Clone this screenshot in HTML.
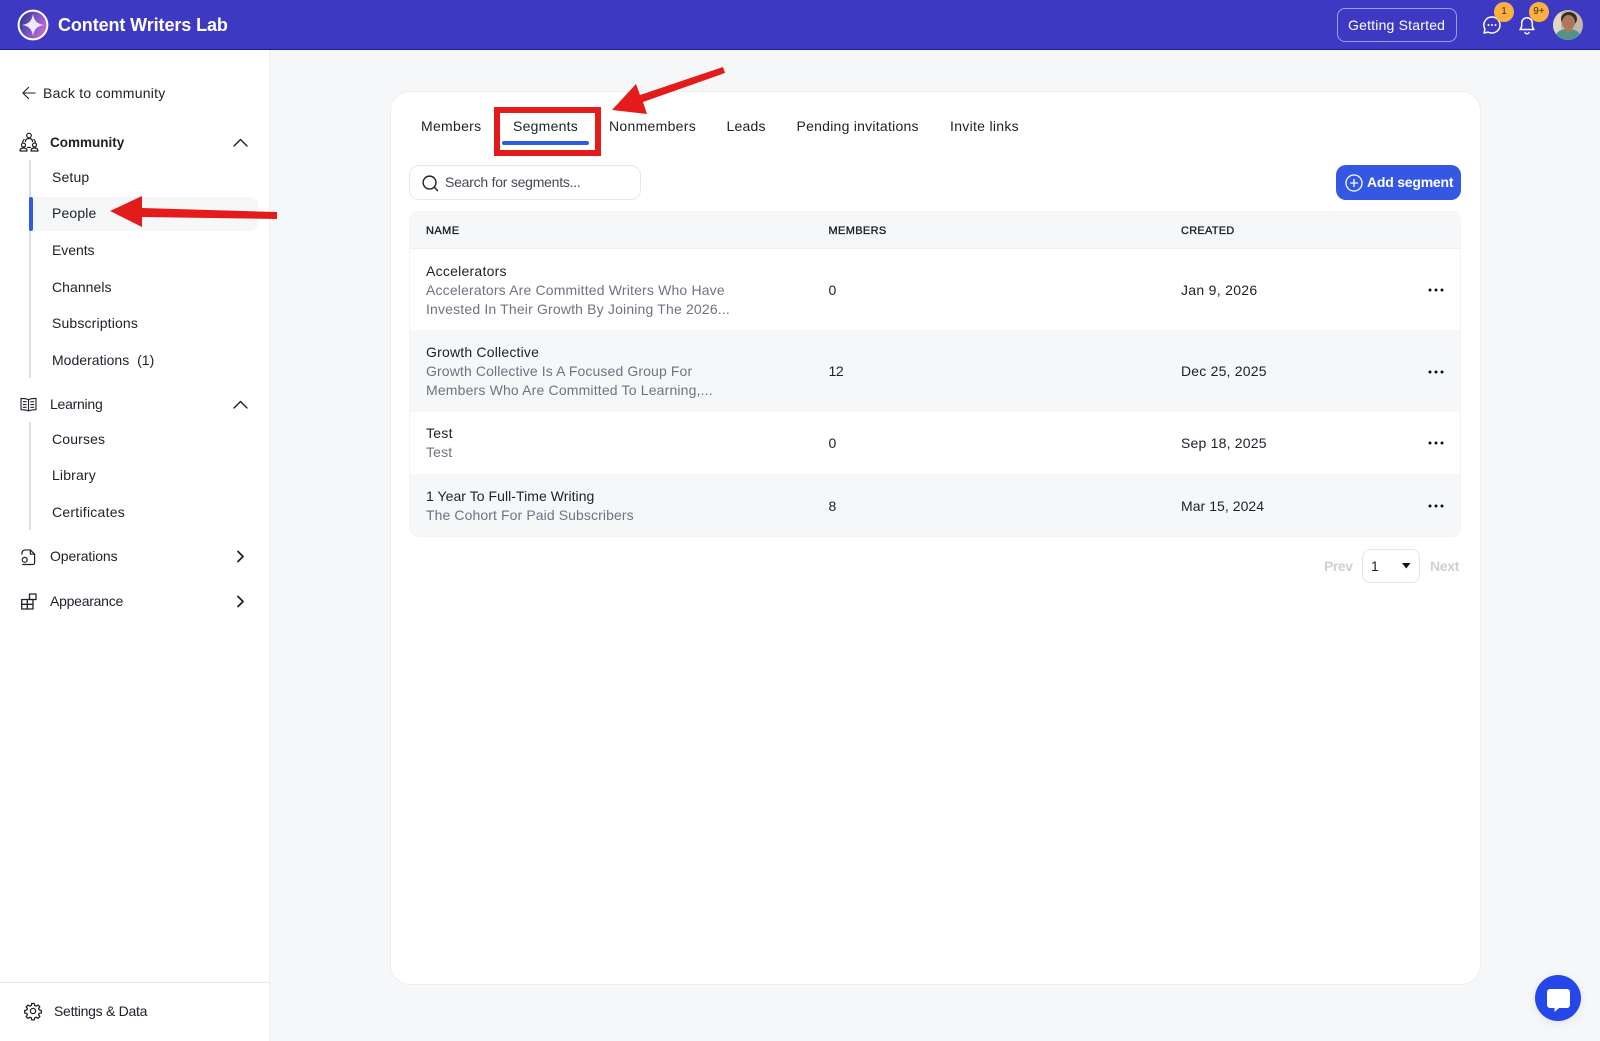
<!DOCTYPE html>
<html lang="en"><head><meta charset="utf-8"><title>Content Writers Lab</title>
<style>
*{box-sizing:border-box;margin:0;padding:0}
html,body{width:1600px;height:1041px;overflow:hidden;background:#f6f7f9;font-family:"Liberation Sans",Arial,sans-serif;color:#1c2028}
.t{position:absolute;white-space:nowrap;font-size:14px;line-height:18px;letter-spacing:.3px}
.a{position:absolute}
.g{color:#6f7380;letter-spacing:.17px}
.n{letter-spacing:.15px}
.h{font-size:11px;color:#1c2028;letter-spacing:.3px;-webkit-text-stroke:.35px #1c2028}
svg.a{overflow:visible}
.i{fill:none;stroke:#1c2028;stroke-width:1.4;stroke-linecap:round;stroke-linejoin:round}
</style></head><body>
<div class="a" style="left:0;top:0;width:1600px;height:50px;background:#3e39c3;border-bottom:1px solid #1e1a9e"></div>
<div class="a" style="left:0;top:50px;width:270px;height:991px;background:#fff;border-right:1px solid #eceef1"></div>
<div class="a" style="left:390px;top:91px;width:1091px;height:894px;background:#fff;border:1px solid #eceef1;border-radius:20px"></div>

<!-- header -->
<svg class="a" style="left:16.500px;top:9px" width="32" height="32" viewBox="0 0 32 32"><defs><linearGradient id="lg" x1="0" y1="0" x2="1" y2=".5"><stop offset="0" stop-color="#202c78"/><stop offset=".5" stop-color="#6a50bc"/><stop offset="1" stop-color="#c268d4"/></linearGradient></defs><circle cx="16" cy="16" r="14.400" fill="url(#lg)" stroke="#fff" stroke-width="2"/><path d="M16 5C17.200 12 20 14.800 27 16 20 17.200 17.200 20 16 27 14.800 20 12 17.200 5 16 12 14.800 14.800 12 16 5Z" fill="#ece9fc"/></svg>
<div class="t" style="left:58px;top:14px;font-size:18px;line-height:22px;font-weight:700;color:#fff;letter-spacing:-.1px">Content Writers Lab</div>
<div class="a" style="left:1337px;top:8px;width:120px;height:34px;border:1px solid #9f9de0;border-radius:8px"></div>
<div class="t" style="left:1348px;top:16px;color:#fff;font-size:14px;letter-spacing:.2px">Getting Started</div>
<svg class="a" style="left:1482px;top:15px" width="20" height="20" viewBox="0 0 20 20"><path d="M10 2a8 8 0 0 1 0 16c-1.500 0-2.700-.3-3.800-.9L2 18l1-3.900A8 8 0 0 1 10 2Z" fill="none" stroke="#fff" stroke-width="1.500" stroke-linejoin="round"/><circle cx="6.500" cy="10" r="1" fill="#fff"/><circle cx="10" cy="10" r="1" fill="#fff"/><circle cx="13.500" cy="10" r="1" fill="#fff"/></svg>
<svg class="a" style="left:1518px;top:15px" width="18" height="20" viewBox="0 0 18 20"><path d="M2 14.500c1.200-1.200 1.700-2.200 1.700-4.500V8a5.300 5.300 0 0 1 10.600 0v2c0 2.300.5 3.300 1.700 4.500Z" fill="none" stroke="#fff" stroke-width="1.500" stroke-linejoin="round"/><path d="M7 17.500a2.200 2.200 0 0 0 4 0" fill="none" stroke="#fff" stroke-width="1.500" stroke-linecap="round"/></svg>
<div class="a" style="left:1494px;top:2px;width:20px;height:20px;border-radius:50%;background:#fbb040;color:#3b2a10;font-size:10px;line-height:20px;text-align:center">1</div>
<div class="a" style="left:1529px;top:2px;width:20px;height:20px;border-radius:50%;background:#fbb040;color:#3b2a10;font-size:10px;line-height:20px;text-align:center">9+</div>
<svg class="a" style="left:1553px;top:10px" width="30" height="30" viewBox="0 0 30 30"><defs><clipPath id="av"><circle cx="15" cy="15" r="15"/></clipPath></defs><g clip-path="url(#av)"><rect width="30" height="30" fill="#c4b6aa"/><rect x="0" y="0" width="8" height="30" fill="#ddd6ca"/><ellipse cx="16" cy="9" rx="8" ry="7" fill="#3a2a22"/><ellipse cx="15.500" cy="12.500" rx="6.500" ry="7.500" fill="#ac775c"/><path d="M2 30c0-8 5-11 13-11s13 3 13 11Z" fill="#4f9488"/><path d="M11 19l4 5 4-5Z" fill="#ac775c"/></g></svg>

<!-- sidebar -->
<svg class="a i" style="left:22px;top:86px;stroke-width:1.200" width="14" height="14" viewBox="0 0 15 14"><path d="M14 7H1.500M7 1 1 7l6 6"/></svg>
<div class="t" style="left:43px;top:84px;letter-spacing:.25px">Back to community</div>

<svg class="a i" style="left:19px;top:132px;stroke-width:1.200" width="20" height="20" viewBox="0 0 20 20"><circle cx="10" cy="3.500" r="2.300"/><path d="M6.500 9.500c0-2 1.500-3 3.500-3s3.500 1 3.500 3"/><circle cx="4.500" cy="13" r="2"/><path d="M1 19c0-2 1.500-3 3.500-3S8 17 8 19Z"/><circle cx="15.500" cy="13" r="2"/><path d="M12 19c0-2 1.500-3 3.500-3s3.500 1 3.500 3Z"/><path d="M5 7.500 3.500 10M15 7.500l1.500 2.500M8.500 15.500h3"/></svg>
<div class="t" style="left:50px;top:134px;font-weight:700;font-size:13.500px;letter-spacing:0">Community</div>
<svg class="a i" style="left:233px;top:138px" width="15" height="9" viewBox="0 0 15 9"><path d="M1 8l6.500-6.500L14 8"/></svg>
<div class="a" style="left:29px;top:160px;width:2px;height:218px;background:#dcdee2"></div>
<div class="a" style="left:30px;top:197px;width:228px;height:34px;background:#f6f7f9;border-radius:0 8px 8px 0"></div>
<div class="a" style="left:28.500px;top:197px;width:4px;height:34px;background:#2f5be7;border-radius:2px"></div>
<div class="t" style="left:52px;top:168px;letter-spacing:.15px">Setup</div>
<div class="t" style="left:52px;top:204px;letter-spacing:.15px">People</div>
<div class="t" style="left:52px;top:241px;letter-spacing:-.05px">Events</div>
<div class="t" style="left:52px;top:278px;letter-spacing:.05px">Channels</div>
<div class="t" style="left:52px;top:314px;letter-spacing:.15px">Subscriptions</div>
<div class="t" style="left:52px;top:351px;letter-spacing:.02px">Moderations&nbsp; (1)</div>

<svg class="a i" style="left:20px;top:397px;stroke-width:1.200" width="17" height="15" viewBox="0 0 18 16"><path d="M9 3C7.500 1.800 5 1.500 1 1.500v12c4 0 6.500.3 8 1.500 1.500-1.200 4-1.500 8-1.500v-12c-4 0-6.500.3-8 1.500ZM9 3v12"/><path d="M3.500 5h3M3.500 8h3M3.500 11h3M11.500 5h3M11.500 8h3M11.500 11h3"/></svg>
<div class="t" style="left:50px;top:395px;letter-spacing:-.25px">Learning</div>
<svg class="a i" style="left:233px;top:400px" width="15" height="9" viewBox="0 0 15 9"><path d="M1 8l6.500-6.500L14 8"/></svg>
<div class="a" style="left:29px;top:422px;width:2px;height:108px;background:#dcdee2"></div>
<div class="t" style="left:52px;top:430px;letter-spacing:.15px">Courses</div>
<div class="t" style="left:52px;top:466px;letter-spacing:.15px">Library</div>
<div class="t" style="left:52px;top:503px;letter-spacing:.25px">Certificates</div>

<svg class="a i" style="left:20px;top:548px;stroke-width:1.300" width="16" height="18" viewBox="0 0 17 18"><path d="M2 6V5a3.500 3.500 0 0 1 3.500-3.500H11L15.500 6v9a2 2 0 0 1-2 2H3"/><path d="M11 1.500V6h4.500"/><circle cx="5" cy="12" r="2.600"/></svg>
<div class="t" style="left:50px;top:547px;letter-spacing:-.1px">Operations</div>
<svg class="a i" style="left:236px;top:550px;stroke-width:1.800" width="9" height="13" viewBox="0 0 9 13"><path d="M2 1.500l5 5-5 5"/></svg>

<svg class="a i" style="left:21px;top:593px;stroke-width:1.300" width="16" height="17" viewBox="0 0 16 17"><path d="M.7 6.500H12V16H.7ZM6.300 6.500V16M.7 11.300H12"/><rect x="8.500" y="1" width="6.500" height="5.500"/></svg>
<div class="t" style="left:50px;top:592px;letter-spacing:-.25px">Appearance</div>
<svg class="a i" style="left:236px;top:595px;stroke-width:1.800" width="9" height="13" viewBox="0 0 9 13"><path d="M2 1.500l5 5-5 5"/></svg>

<div class="a" style="left:0;top:982px;width:269px;height:1px;background:#e6e8eb"></div>
<svg class="a i" style="left:24px;top:1002px;stroke-width:1.700" width="18" height="18" viewBox="0 0 24 24"><path d="M10.300 2.500h3.400l.6 2.900 1.900.8 2.500-1.600 2.400 2.400-1.600 2.500.8 1.900 2.900.6v3.400l-2.900.6-.8 1.900 1.600 2.500-2.400 2.400-2.500-1.600-1.900.8-.6 2.900h-3.400l-.6-2.900-1.900-.8-2.500 1.600-2.400-2.400 1.600-2.500-.8-1.900-2.900-.6v-3.400l2.900-.6.8-1.900-1.600-2.500 2.400-2.400 2.500 1.600 1.900-.8Z" transform="translate(0 -.5) scale(1 .98)"/><circle cx="12" cy="12" r="3.500"/></svg>
<div class="t" style="left:54px;top:1002px;letter-spacing:-.28px">Settings &amp; Data</div>

<!-- tabs -->
<div class="t" style="left:421px;top:117px">Members</div>
<div class="t" style="left:513px;top:117px;letter-spacing:.25px">Segments</div>
<div class="t" style="left:609px;top:117px">Nonmembers</div>
<div class="t" style="left:726.500px;top:117px;letter-spacing:.2px">Leads</div>
<div class="t" style="left:796.500px;top:117px;letter-spacing:.25px">Pending invitations</div>
<div class="t" style="left:950px;top:117px">Invite links</div>
<div class="a" style="left:502px;top:141px;width:87px;height:4px;background:#2f5be7;border-radius:2px"></div>
<div class="a" style="left:494px;top:107px;width:107px;height:49px;border:6px solid #e41b1b"></div>

<!-- search + add -->
<div class="a" style="left:409px;top:165px;width:232px;height:35px;background:#fff;border:1px solid #e7e8eb;border-radius:10px"></div>
<svg class="a i" style="left:422px;top:174.500px;stroke-width:1.500" width="17" height="17" viewBox="0 0 18 18"><circle cx="8" cy="8" r="6.800"/><path d="M13 13l3.500 3.500"/></svg>
<div class="t g" style="left:445px;top:173px;color:#444854;letter-spacing:-.24px">Search for segments...</div>
<div class="a" style="left:1336px;top:165px;width:125px;height:35px;background:#3558e4;border-radius:10px"></div>
<svg class="a" style="left:1345px;top:174px" width="18" height="18" viewBox="0 0 18 18"><circle cx="9" cy="9" r="8" fill="none" stroke="#fff" stroke-width="1.300"/><path d="M9 5v8M5 9h8" stroke="#fff" stroke-width="1.300"/></svg>
<div class="t" style="left:1367px;top:173px;color:#fff;font-weight:700;letter-spacing:-.22px">Add segment</div>

<!-- table -->
<div class="a" style="left:409px;top:211px;width:1052px;height:326px;background:#fff;border:1px solid #f3f4f6;border-radius:10px;overflow:hidden">
 <div class="a" style="left:0;top:0;width:1052px;height:37px;background:#f6f7f9;border-bottom:1px solid #eef0f2"></div>
 <div class="a" style="left:0;top:118px;width:1052px;height:82px;background:#f6f7f9"></div>
 <div class="a" style="left:0;top:262px;width:1052px;height:64px;background:#f6f7f9"></div>
</div>
<div class="t h" style="left:426px;top:222px;letter-spacing:.45px">NAME</div>
<div class="t h" style="left:828.500px;top:222px;letter-spacing:.35px">MEMBERS</div>
<div class="t h" style="left:1181px;top:222px;letter-spacing:.25px">CREATED</div>

<div class="t" style="left:426px;top:262px;letter-spacing:.25px">Accelerators</div>
<div class="t g" style="left:426px;top:281px">Accelerators Are Committed Writers Who Have</div>
<div class="t g" style="left:426px;top:300px">Invested In Their Growth By Joining The 2026...</div>
<div class="t" style="left:828.500px;top:281px">0</div>
<div class="t" style="left:1181px;top:281px">Jan 9, 2026</div>

<div class="t" style="left:426px;top:343px;letter-spacing:.2px">Growth Collective</div>
<div class="t g" style="left:426px;top:362px;letter-spacing:.12px">Growth Collective Is A Focused Group For</div>
<div class="t g" style="left:426px;top:381px">Members Who Are Committed To Learning,...</div>
<div class="t" style="left:828.500px;top:362px;letter-spacing:-.4px">12</div>
<div class="t" style="left:1181px;top:362px;letter-spacing:.2px">Dec 25, 2025</div>

<div class="t" style="left:426px;top:424px">Test</div>
<div class="t g" style="left:426px;top:443px">Test</div>
<div class="t" style="left:828.500px;top:434px">0</div>
<div class="t" style="left:1181px;top:434px;letter-spacing:.2px">Sep 18, 2025</div>

<div class="t" style="left:426px;top:487px;letter-spacing:.05px">1 Year To Full-Time Writing</div>
<div class="t g" style="left:426px;top:506px;letter-spacing:.1px">The Cohort For Paid Subscribers</div>
<div class="t" style="left:828.500px;top:497px">8</div>
<div class="t" style="left:1181px;top:497px;letter-spacing:.05px">Mar 15, 2024</div>

<svg class="a" style="left:1426.500px;top:288px" width="18" height="4"><g fill="#111"><circle cx="3" cy="2" r="1.500"/><circle cx="9" cy="2" r="1.500"/><circle cx="15" cy="2" r="1.500"/></g></svg>
<svg class="a" style="left:1426.500px;top:369.500px" width="18" height="4"><g fill="#111"><circle cx="3" cy="2" r="1.500"/><circle cx="9" cy="2" r="1.500"/><circle cx="15" cy="2" r="1.500"/></g></svg>
<svg class="a" style="left:1426.500px;top:441px" width="18" height="4"><g fill="#111"><circle cx="3" cy="2" r="1.500"/><circle cx="9" cy="2" r="1.500"/><circle cx="15" cy="2" r="1.500"/></g></svg>
<svg class="a" style="left:1426.500px;top:503.500px" width="18" height="4"><g fill="#111"><circle cx="3" cy="2" r="1.500"/><circle cx="9" cy="2" r="1.500"/><circle cx="15" cy="2" r="1.500"/></g></svg>

<!-- pagination -->
<div class="t" style="left:1324px;top:557px;color:#cfd0d3;font-weight:700;letter-spacing:-.45px">Prev</div>
<div class="a" style="left:1362px;top:549px;width:58px;height:34px;background:#fff;border:1px solid #e5e6e8;border-radius:8px"></div>
<div class="t" style="left:1371px;top:557px">1</div>
<svg class="a" style="left:1401.500px;top:563px" width="8.500" height="5.500"><path d="M0 0h8.500L4.250 5.500Z" fill="#111"/></svg>
<div class="t" style="left:1430px;top:557px;color:#cfd0d3;font-weight:700;letter-spacing:-.3px">Next</div>

<!-- red arrows -->
<svg class="a" style="left:0;top:0" width="1600" height="1041"><polygon fill="#e41b1b" points="110,211 142,196 142,208 277,212 277,219 142,217 142,227"/><polygon fill="#e41b1b" points="612,110 636,84 640,95 723,67 725,73 643,102 647,114"/></svg>

<!-- chat widget -->
<div class="a" style="left:1535px;top:975px;width:46px;height:46px;border-radius:50%;background:#2547e8;box-shadow:0 2px 10px rgba(0,0,0,.08)"></div>
<svg class="a" style="left:1547px;top:988.500px" width="23" height="23" viewBox="0 0 23 23"><path d="M3 0h17a3 3 0 0 1 3 3v13a3 3 0 0 1-3 3H12l-4.500 4v-4H3a3 3 0 0 1-3-3V3a3 3 0 0 1 3-3Z" fill="#fff"/></svg>
</body></html>
